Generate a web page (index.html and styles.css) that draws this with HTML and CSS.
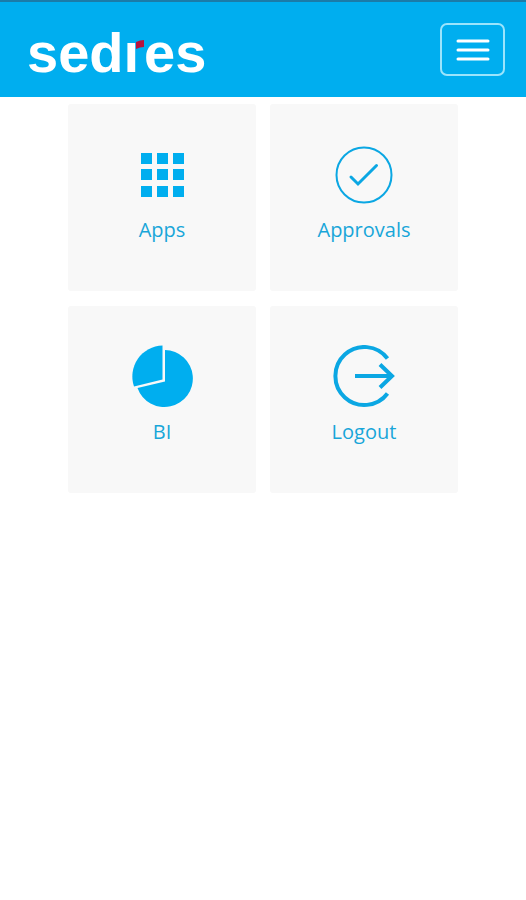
FILE: index.html
```html
<!DOCTYPE html>
<html lang="en">
<head>
    <meta charset="UTF-8">
    <meta name="viewport" content="width=device-width, initial-scale=1.0">
    <title>sedres</title>
    <link rel="stylesheet" href="styles.css">
</head>
<body>

    <!-- Top bar -->
    <header class="navbar">
        <a class="logo" href="#" aria-label="sedres home">
            <span>sed</span><span class="logo-r">ı<svg class="flag" viewBox="0 0 8 9" aria-hidden="true"><path d="M0 2 Q4 0 8 0 V7 Q4 7 0 9Z"/></svg></span><span>es</span>
        </a>
        <button class="menu-btn" type="button" aria-label="Menu">
            <svg width="34" height="22" viewBox="0 0 34 22">
                <path d="M2 2H32M2 11H32M2 20H32"/>
            </svg>
        </button>
    </header>

    <!-- Tiles -->
    <main class="tiles">
        <a class="tile" href="#apps">
            <svg class="icon" viewBox="0 0 64 64">
                <path d="M11 10h11v11H11zM27 10h11v11H27zM43 10h11v11H43zM11 26h11v11H11zM27 26h11v11H27zM43 26h11v11H43zM11 43h11v11H11zM27 43h11v11H27zM43 43h11v11H43z"/>
            </svg>
            <span>Apps</span>
        </a>
        <a class="tile" href="#approvals">
            <svg class="icon line" viewBox="0 0 64 64">
                <circle cx="32" cy="32" r="27.500" stroke-width="2"/>
                <path d="M19 34l7 7L44.500 22.500" stroke-width="3" stroke-linecap="round"/>
            </svg>
            <span>Approvals</span>
        </a>
        <a class="tile" href="#bi">
            <svg class="icon" viewBox="0 0 64 64">
                <path d="M32.500 .500V34.500L4 41.500A31 31 0 0 1 32.500 .500z"/>
                <path d="M35 5A28.500 28.500 0 1 1 7.500 43L35 36.500z"/>
            </svg>
            <span>BI</span>
        </a>
        <a class="tile" href="#logout">
            <svg class="icon line" viewBox="0 0 64 64">
                <path d="M55.500 13.500A29 29 0 1 0 55.500 48.500" stroke-width="4"/>
                <path d="M23 31H60M48 19.500L60 31L48 42.500" stroke-width="4"/>
            </svg>
            <span>Logout</span>
        </a>
    </main>

</body>
</html>
```

FILE: styles.css
```css
* {
    box-sizing: border-box;
}
body {
    margin: 0;
    background: #fff;
    font-family: 'Open Sans', sans-serif;
    color: #00aeef;
}
.navbar {
    display: flex;
    align-items: center;
    justify-content: space-between;
    padding: 21px 21px 21px 27px;
    background: #00aeef;
    border-top: 2px solid #1b7ba8;
}
.logo {
    display: flex;
    padding-top: 6px;
    font-family: 'Liberation Sans', Arial, sans-serif;
    font-size: 56px;
    font-weight: bold;
    line-height: 47px;
    color: #fff;
    text-decoration: none;
}
.logo-r {
    position: relative;
    padding-right: 5px;
}
.flag {
    position: absolute;
    top: 11px;
    right: 0;
    width: 8px;
    height: 9px;
    fill: #b8123c;
}
.menu-btn {
    display: flex;
    align-items: center;
    justify-content: center;
    width: 65px;
    height: 53px;
    padding: 0;
    background: none;
    border: 2px solid #9be4fc;
    border-radius: 7px;
    cursor: pointer;
}
.menu-btn svg {
    stroke: #fff;
    stroke-width: 3;
    stroke-linecap: round;
}
.tiles {
    display: grid;
    grid-template-columns: 1fr 1fr;
    gap: 15px 14px;
    max-width: 390px;
    margin: 7px auto;
}
.tile {
    display: flex;
    flex-direction: column;
    align-items: center;
    gap: 8px;
    aspect-ratio: 188 / 187;
    padding-top: 39px;
    background: #f8f8f8;
    border-radius: 3px;
    color: #18a6d9;
    font-size: 20px;
    line-height: 30px;
    text-decoration: none;
}
.icon {
    width: 64px;
    height: 64px;
    fill: #00aeef;
}
.line {
    fill: none;
    stroke: #0ba7e3;
}
```
